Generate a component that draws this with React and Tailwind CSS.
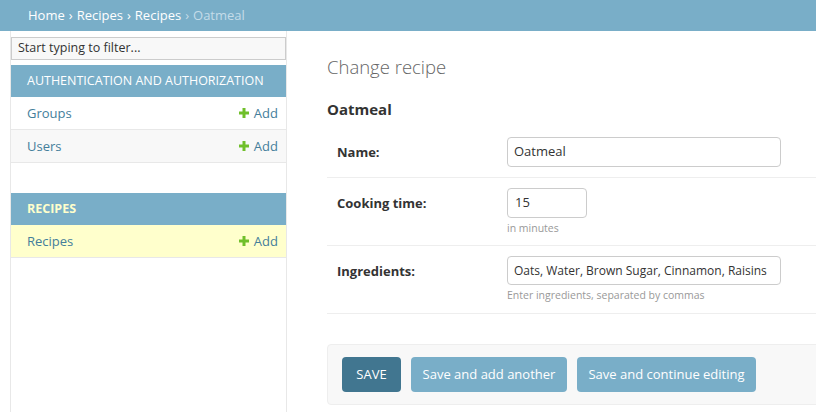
import React from "react";

const Plus = () => (
  <svg width="10" height="10" viewBox="0 0 10 10" className="inline-block mr-[5px] mb-[1px]">
    <rect x="3.5" y="0" width="3" height="10" fill="#70bf2b" />
    <rect x="0" y="3.5" width="10" height="3" fill="#70bf2b" />
  </svg>
);

function NavRow({ name, bg }) {
  return (
    <div className={`flex items-center justify-between h-[33px] pl-[16px] pr-[8px] pt-[1px] border-b border-[#e8e8e8] text-[13px] ${bg}`}>
      <span className="text-[#447e9b]">{name}</span>
      <span className="text-[#447e9b] flex items-center"><Plus />Add</span>
    </div>
  );
}

function FormRow({ label, children, help, h }) {
  return (
    <div className={`flex border-b border-[#eee] pl-[10px] ${h}`}>
      <div className="w-[170px] pt-[16px] text-[13px] font-bold text-[#333]">{label}</div>
      <div className="pt-[10px]">
        {children}
        {help && <div className="text-[10.5px] text-[#999] mt-[3px] leading-[14px]">{help}</div>}
      </div>
    </div>
  );
}

export default function App() {
  return (
    <div className="w-[816px] h-[412px] overflow-hidden bg-white text-[#333]" style={{ fontFamily: '"Open Sans", "Noto Sans", sans-serif' }}>
      <div className="h-[31px] bg-[#79aec8] flex items-center pl-[28px] text-[13px] text-white">
        <span>Home</span>
        <span className="mx-[4px]">›</span>
        <span>Recipes</span>
        <span className="mx-[4px]">›</span>
        <span>Recipes</span>
        <span className="mx-[4px] text-[#c4dce8]">›</span>
        <span className="text-[#c4dce8]">Oatmeal</span>
      </div>
      <div className="flex h-[381px]">
        <div className="ml-[10px] w-[277px] shrink-0 border-l border-r border-[#e8e8e8] pt-[6px]">
          <div className="h-[23px] border border-[#ccc] bg-[#f8f8f8] flex items-center pl-[6px] text-[12.5px] text-[#333]">
            Start typing to filter...
          </div>
          <div className="mt-[5px]">
            <div className="h-[32px] bg-[#79aec8] flex items-center pl-[16px] text-[12.5px] text-white">
              AUTHENTICATION AND AUTHORIZATION
            </div>
            <NavRow name="Groups" bg="bg-white" />
            <NavRow name="Users" bg="bg-[#f8f8f8]" />
          </div>
          <div className="mt-[30px]">
            <div className="h-[32px] bg-[#79aec8] flex items-center pl-[16px] text-[12.5px] font-bold text-[#ffffcc]">
              RECIPES
            </div>
            <NavRow name="Recipes" bg="bg-[#ffffcc]" />
          </div>
        </div>
        <div className="flex-1 pl-[40px] min-w-0">
          <div className="w-[520px]">
            <h1 className="mt-[22px] text-[18.5px] font-light text-[#666] leading-[28px]">Change recipe</h1>
            <h2 className="mt-[17px] text-[15px] font-bold text-[#333] leading-[22px]">Oatmeal</h2>
            <div className="mt-[7px]">
              <FormRow label="Name:" h="h-[51px]">
                <div className="w-[274px] h-[30px] border border-[#ccc] rounded-[4px] flex items-center pl-[6px] text-[13px] text-[#333]">Oatmeal</div>
              </FormRow>
              <FormRow label="Cooking time:" help="in minutes" h="h-[68px]">
                <div className="w-[80px] h-[30px] border border-[#ccc] rounded-[4px] flex items-center pl-[7px] text-[13px] text-[#333]">15</div>
              </FormRow>
              <FormRow label="Ingredients:" help="Enter ingredients, separated by commas" h="h-[68px]">
                <div className="w-[274px] h-[29px] border border-[#ccc] rounded-[4px] flex items-center pl-[6px] text-[12px] text-[#333] whitespace-nowrap overflow-hidden">Oats, Water, Brown Sugar, Cinnamon, Raisins</div>
              </FormRow>
            </div>
            <div className="mt-[30px] h-[61px] border border-[#eee] rounded-[4px] bg-[#f8f8f8] flex items-center gap-[10px] pl-[14px]">
              <div className="h-[35px] w-[59px] rounded-[4px] bg-[#417690] text-white text-[13px] flex items-center justify-center">SAVE</div>
              <div className="h-[35px] w-[156px] rounded-[4px] bg-[#79aec8] text-white text-[13px] flex items-center justify-center">Save and add another</div>
              <div className="h-[35px] w-[179px] rounded-[4px] bg-[#79aec8] text-white text-[13px] flex items-center justify-center">Save and continue editing</div>
            </div>
          </div>
        </div>
      </div>
    </div>
  );
}
